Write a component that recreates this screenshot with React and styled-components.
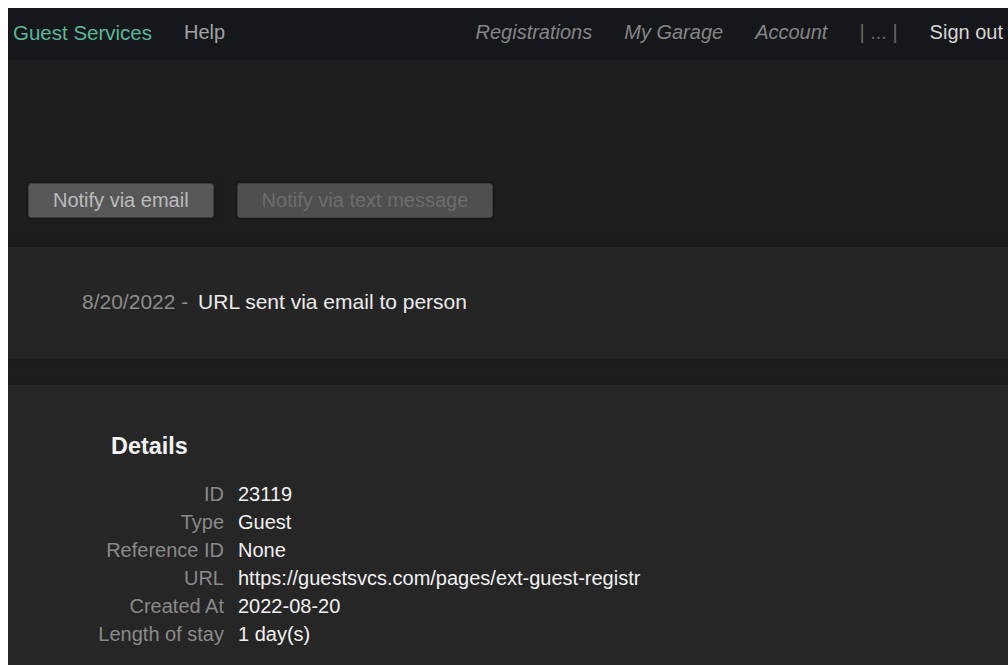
import React from "react";
import styled, { createGlobalStyle } from "styled-components";

const GlobalStyle = createGlobalStyle`
  body {
    margin: 8px 0 0 8px;
    background: #ffffff;
    font-family: "Liberation Sans", Arial, sans-serif;
    font-size: 20px;
    overflow: hidden;
  }
`;

const Page = styled.div`
  background: #1e1e1e;
  min-height: 700px;
  color: #e8e8e8;
`;

const NavBar = styled.nav`
  display: flex;
  justify-content: space-between;
  align-items: flex-start;
  height: 52px;
  box-sizing: border-box;
  padding: 13px 5px 0 5px;
  background: #16171b;
`;

const NavGroup = styled.div`
  display: flex;
  gap: 32px;
  white-space: nowrap;
`;

const Brand = styled.span`
  color: #58b898;
  font-size: 20.5px;
`;

const NavLink = styled.span`
  color: ${(p) => (p.$muted ? "#858585" : p.$bright ? "#d6d6d6" : "#a2a2a2")};
  font-style: ${(p) => (p.$muted ? "italic" : "normal")};
`;

const Divider = styled.span`
  color: #666666;
`;

const ActionArea = styled.section`
  padding: 123px 20px 29px;
`;

const ButtonRow = styled.div`
  display: flex;
  gap: 23px;
`;

const Button = styled.button`
  height: 35px;
  padding: 0 24px;
  font-family: inherit;
  font-size: 20px;
  border: 1px solid #3c3c3c;
  border-radius: 3px;
  box-shadow: 0 0 3px rgba(0, 0, 0, 0.55);
  background: ${(p) => (p.disabled ? "#4f4f4f" : "#575757")};
  color: ${(p) => (p.disabled ? "#6c6c6c" : "#bcbcbc")};
  cursor: ${(p) => (p.disabled ? "default" : "pointer")};
`;

const ActivityLog = styled.section`
  background: #252525;
  padding: 43px 74px 45px;
  box-shadow: 0 -3px 5px rgba(0, 0, 0, 0.12);
`;

const LogEntry = styled.p`
  margin: 0;
  font-size: 21px;
  color: #ececec;
`;

const DateStamp = styled.span`
  color: #8c8c8c;
  margin-right: 4px;
`;

const DetailsPanel = styled.section`
  margin-top: 26px;
  background: #262626;
  padding: 48px 0 40px 88px;
  box-shadow: 0 -3px 5px rgba(0, 0, 0, 0.12);
`;

const Heading = styled.h3`
  margin: 0 0 20px 15px;
  font-size: 23.4px;
  font-weight: bold;
  color: #f4f4f4;
`;

const DetailGrid = styled.dl`
  display: grid;
  grid-template-columns: 128px 1fr;
  column-gap: 14px;
  margin: 0;
  line-height: 28px;
  white-space: nowrap;
`;

const Label = styled.dt`
  text-align: right;
  color: #8a8a8a;
`;

const Value = styled.dd`
  margin: 0;
  color: #f2f2f2;
`;

const details = [
  ["ID", "23119"],
  ["Type", "Guest"],
  ["Reference ID", "None"],
  ["URL", "https://guestsvcs.com/pages/ext-guest-registr"],
  ["Created At", "2022-08-20"],
  ["Length of stay", "1 day(s)"],
];

export default function App() {
  return (
    <>
      <GlobalStyle />
      <Page>
        <NavBar>
          <NavGroup>
            <Brand>Guest Services</Brand>
            <NavLink>Help</NavLink>
          </NavGroup>
          <NavGroup>
            <NavLink $muted>Registrations</NavLink>
            <NavLink $muted>My Garage</NavLink>
            <NavLink $muted>Account</NavLink>
            <Divider>| ... |</Divider>
            <NavLink $bright>Sign out</NavLink>
          </NavGroup>
        </NavBar>

        <ActionArea>
          <ButtonRow>
            <Button>Notify via email</Button>
            <Button disabled>Notify via text message</Button>
          </ButtonRow>
        </ActionArea>

        <ActivityLog>
          <LogEntry>
            <DateStamp>8/20/2022 -</DateStamp> URL sent via email to person
          </LogEntry>
        </ActivityLog>

        <DetailsPanel>
          <Heading>Details</Heading>
          <DetailGrid>
            {details.map(([label, value]) => (
              <React.Fragment key={label}>
                <Label>{label}</Label>
                <Value>{value}</Value>
              </React.Fragment>
            ))}
          </DetailGrid>
        </DetailsPanel>
      </Page>
    </>
  );
}
